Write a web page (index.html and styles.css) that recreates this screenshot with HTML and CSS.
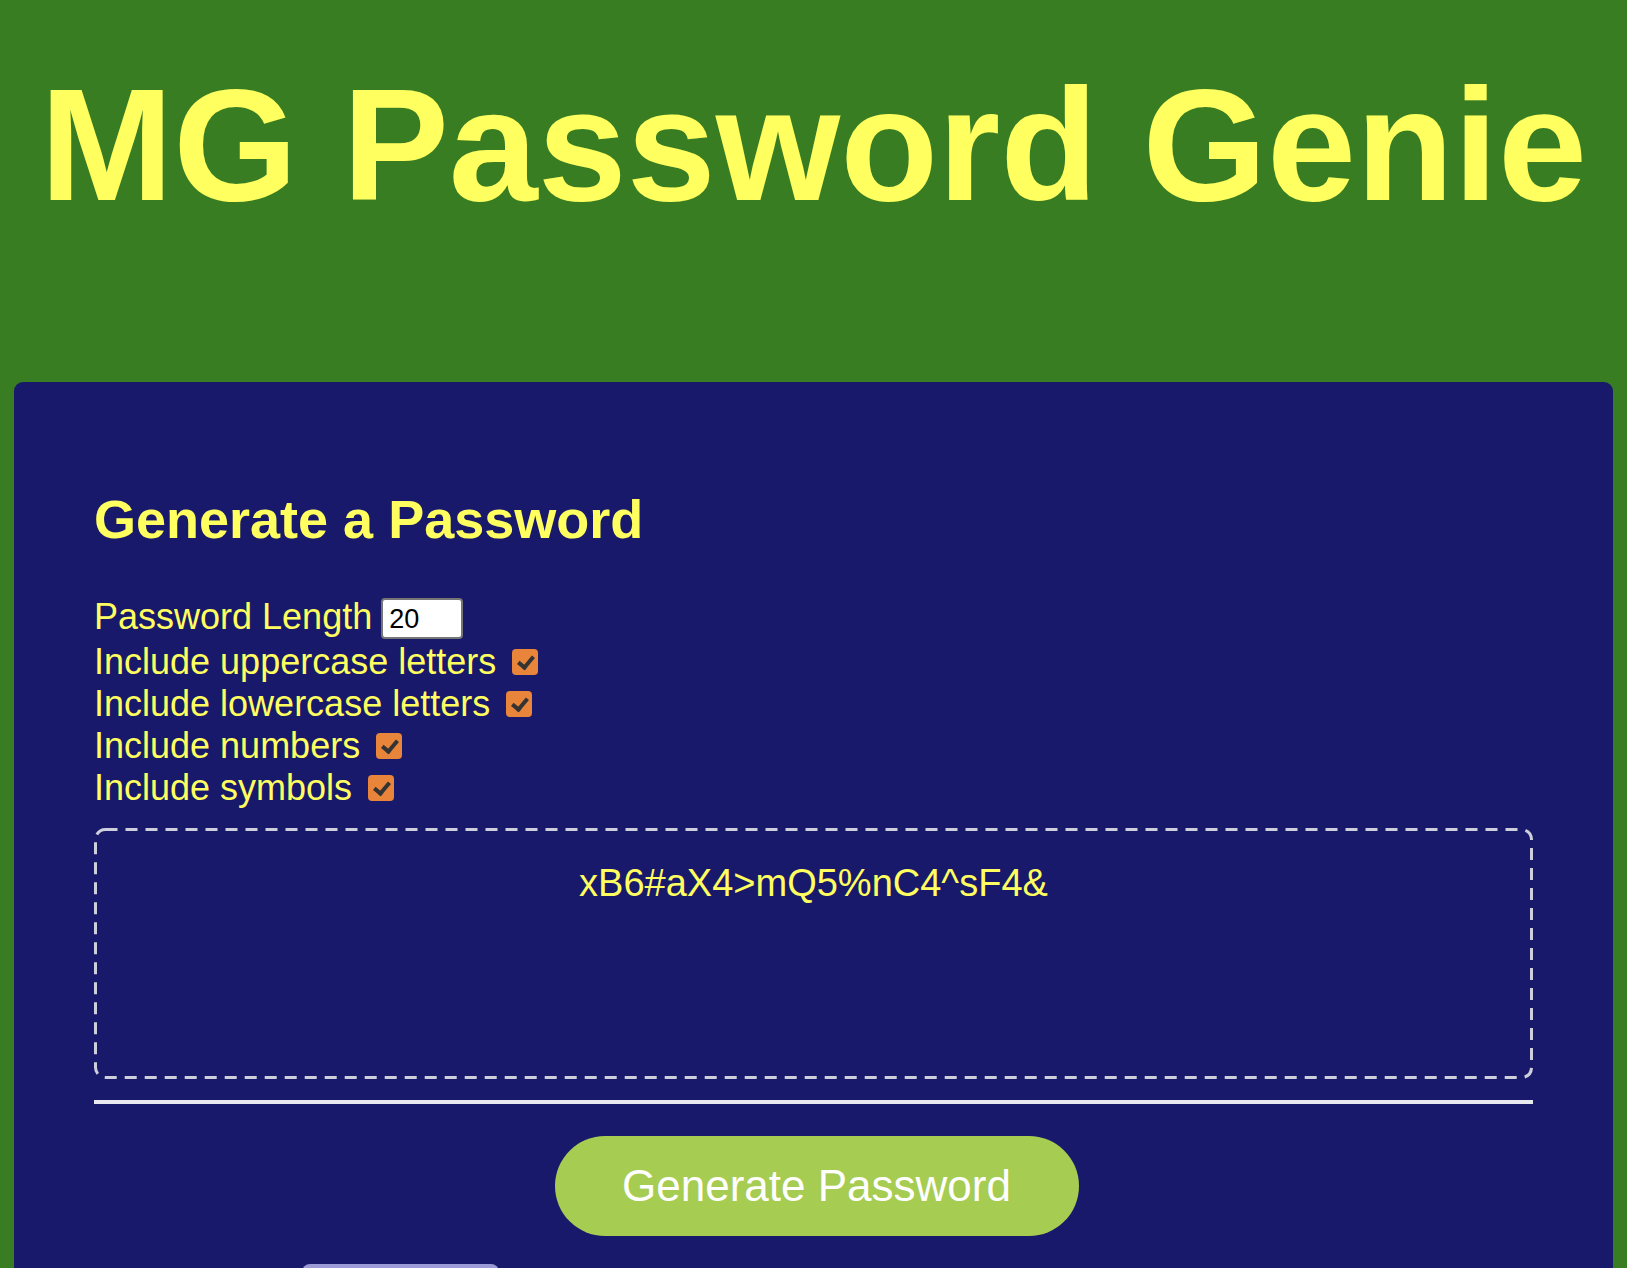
FILE: index.html
```html
<!DOCTYPE html>
<html lang="en">
<head>
<meta charset="utf-8">
<title>MG Password Genie</title>
<link rel="stylesheet" href="styles.css">
</head>
<body>
<header class="header">
  <h1 class="title">MG Password Genie</h1>
</header>
<main class="card">
  <h2 class="card-title">Generate a Password</h2>
  <div class="row row-length">
    <label for="length">Password Length</label>
    <input class="length-input" id="length" type="text" value="20">
  </div>
  <div class="row row-check">
    <label for="upper">Include uppercase letters</label>
    <input class="check" id="upper" type="checkbox" checked>
  </div>
  <div class="row row-check">
    <label for="lower">Include lowercase letters</label>
    <input class="check" id="lower" type="checkbox" checked>
  </div>
  <div class="row row-check">
    <label for="numbers">Include numbers</label>
    <input class="check" id="numbers" type="checkbox" checked>
  </div>
  <div class="row row-check">
    <label for="symbols">Include symbols</label>
    <input class="check" id="symbols" type="checkbox" checked>
  </div>
  <div class="output">
    <svg class="output-border" aria-hidden="true"><rect x="1.5" y="1.5" rx="10" ry="10"></rect></svg>
    <span class="output-text">xB6#aX4&gt;mQ5%nC4^sF4&amp;</span>
  </div>
  <div class="divider"></div>
  <div class="actions">
    <button class="generate" type="button">Generate Password</button>
  </div>
  <div class="secondary-row">
    <button class="secondary" type="button" aria-label="Copy"></button>
  </div>
</main>
</body>
</html>
```

FILE: styles.css
```css
html, body {
  margin: 0;
  padding: 0;
}

body {
  background: #387d22;
  font-family: "Liberation Sans", Arial, Helvetica, sans-serif;
  color: #ffff60;
}

.header {
  padding-top: 53px;
  padding-bottom: 145px;
}

.title {
  margin: 0;
  font-size: 160px;
  font-weight: 700;
  line-height: normal;
  text-align: center;
  color: #ffff60;
}

.card {
  margin: 0 14px;
  background: #19196b;
  border-radius: 9px 9px 0 0;
  padding: 106px 80px 60px;
}

.card-title {
  margin: 0 0 46px;
  font-size: 54px;
  font-weight: 700;
  line-height: normal;
  color: #ffff60;
}

.row {
  display: flex;
  font-size: 36px;
  color: #ffff60;
}

.row-length {
  height: 45px;
  align-items: flex-start;
  gap: 9px;
  line-height: normal;
}

.row-check {
  height: 42px;
  line-height: 42px;
  align-items: center;
  gap: 16px;
}

.length-input {
  box-sizing: border-box;
  margin: 2px 0 0;
  width: 82px;
  height: 41px;
  border: 2px solid #767676;
  border-radius: 4px;
  padding: 2px 6px 0;
  font-family: "Liberation Sans", Arial, sans-serif;
  font-size: 27px;
  color: #000;
  background: #fff;
}

.check {
  -webkit-appearance: none;
  appearance: none;
  position: relative;
  box-sizing: border-box;
  width: 26px;
  height: 26px;
  margin: 0;
  border-radius: 4px;
  background: #e8853b;
  flex: none;
}

.check:checked::after {
  content: "";
  position: absolute;
  left: 9px;
  top: 4px;
  width: 6px;
  height: 12px;
  border-right: 4px solid #333333;
  border-bottom: 4px solid #333333;
  transform: rotate(40deg);
}

.output {
  position: relative;
  box-sizing: border-box;
  margin-top: 19px;
  height: 251px;
  padding-top: 34px;
  text-align: center;
  font-size: 38px;
  line-height: normal;
  color: #ffff60;
}

.output-border {
  position: absolute;
  left: 0;
  top: 0;
  width: 100%;
  height: 100%;
  overflow: visible;
}

.output-border rect {
  width: calc(100% - 3px);
  height: calc(100% - 3px);
  fill: none;
  stroke: #cdd0dc;
  stroke-width: 3;
  stroke-dasharray: 12 8;
}

.output-text {
  position: relative;
}

.divider {
  margin-top: 21px;
  height: 4px;
  background: #e8e8f0;
}

.actions {
  display: flex;
  justify-content: center;
  margin-top: 32px;
}

.generate {
  width: 524px;
  height: 100px;
  border: none;
  border-radius: 50px;
  background: #a6cc52;
  color: #ffffff;
  font-family: "Liberation Sans", Arial, sans-serif;
  font-size: 44px;
  padding: 0;
  margin-left: 6px;
}

.secondary-row {
  display: flex;
  margin-top: 28px;
  padding-left: 208px;
}

.secondary {
  width: 197px;
  height: 90px;
  border: none;
  border-radius: 8px;
  background: #9b9bd8;
}
```
